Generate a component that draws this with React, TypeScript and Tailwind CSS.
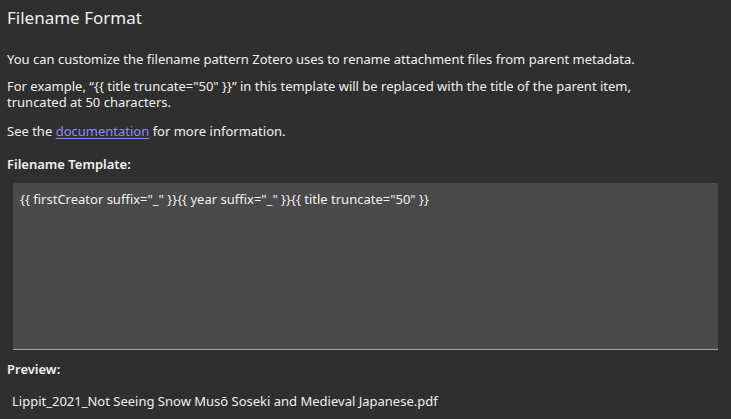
import React from 'react';

export default function App() {
  return (
    <div
      className="w-[731px] h-[419px] overflow-hidden bg-[#2f2f2f] text-[#f0f0f0] text-[13px] leading-[16px]"
      style={{ fontFamily: '"Noto Sans", "Open Sans", sans-serif' }}
    >
      <div className="px-[7px] pt-[7px]">
        <h1 className="text-[17px] leading-[22px] font-normal">Filename Format</h1>

        <p className="mt-[22px]">
          You can customize the filename pattern Zotero uses to rename attachment files from parent metadata.
        </p>
        <div className="mt-[11px] flex flex-col">
          <span>
            For example, “{'{{'} title truncate="50" {'}}'}” in this template will be replaced with the title of the parent item,
          </span>
          <span>truncated at 50 characters.</span>
        </div>
        <p className="mt-[13px]">
          See the{' '}
          <a href="#" className="text-[#8c8cff] underline underline-offset-2">
            documentation
          </a>{' '}
          for more information.
        </p>

        <div className="mt-[17px] font-semibold">Filename Template:</div>
      </div>

      {/* template editor */}
      <div className="mx-[13px] mt-[11px] w-[705px] h-[167px] bg-[#4a4a4a] border-b border-[#a8a8a8] rounded-t-[2px] px-[7px] pt-[8px]">
        {'{{'} firstCreator suffix="_" {'}}'}{'{{'} year suffix="_" {'}}'}{'{{'} title truncate="50" {'}}'}
      </div>

      <div className="px-[7px] mt-[11px] font-semibold">Preview:</div>
      <div className="px-[12px] mt-[16px]">
        Lippit_2021_Not Seeing Snow Musō Soseki and Medieval Japanese.pdf
      </div>
    </div>
  );
}
